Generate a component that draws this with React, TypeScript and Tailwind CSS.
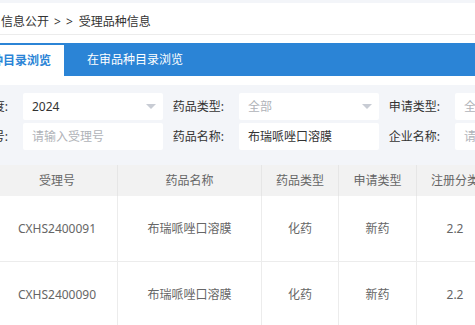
const font = { fontFamily: '"Noto Sans", "Noto Sans CJK SC", sans-serif' };

function Caret() {
  return (
    <span className="h-0 w-0 border-x-[5px] border-t-[5px] border-x-transparent border-t-[#c8ccd4]" />
  );
}

function Field({
  label,
  value,
  placeholder,
  select,
}: {
  label: string;
  value?: string;
  placeholder?: string;
  select?: boolean;
}) {
  return (
    <div className="flex shrink-0 items-center">
      <div className="w-[76px] shrink-0 pr-[15px] text-right text-[12px] leading-[27px] text-[#333]">
        {label}
      </div>
      <div className="flex h-[27px] w-[140px] shrink-0 items-center justify-between rounded-[2px] bg-white pl-[9px] pr-[7px] text-[12px]">
        <span className={value ? "text-[#333]" : "text-[#b0b3b8]"}>{value ?? placeholder}</span>
        {select && <Caret />}
      </div>
    </div>
  );
}

const cols = ["w-[121px]", "w-[144px]", "w-[77px]", "w-[78px]", "w-[77px]", "w-[80px]"];

const rows = [
  ["CXHS2400091", "布瑞哌唑口溶膜", "化药", "新药", "2.2", ""],
  ["CXHS2400090", "布瑞哌唑口溶膜", "化药", "新药", "2.2", ""],
];

export default function App() {
  return (
    <div className="h-[325px] w-[475px] overflow-hidden bg-[#f3f5f9]" style={font}>
      <div className="mt-[3px] bg-white">
        <div className="flex h-[32px] items-center border-b border-[#ececec] pl-[1px] pt-[6px] text-[12px] text-[#333]">
          <span>信息公开</span>
          <span className="ml-[5px]">&gt;</span>
          <span className="ml-[5px]">&gt;</span>
          <span className="ml-[6px]">受理品种信息</span>
        </div>
        <div className="h-[8px]" />
        <div className="flex h-[33px] bg-[#2b84d6]">
          <div className="ml-[-80px] mt-[2px] flex w-[144px] items-center justify-end bg-white pr-[13px] text-[12px] font-bold text-[#2b84d6]">
            受理品种目录浏览
          </div>
          <div className="flex items-center pl-[23px] pt-[1px] text-[12px] text-white">在审品种目录浏览</div>
        </div>
        <div className="h-[9px]" />
      </div>

      <div className="ml-[-53px] flex flex-col gap-[3px] pb-[15px] pt-[8px]">
        <div className="flex">
          <Field label="年度:" value="2024" select />
          <Field label="药品类型:" placeholder="全部" select />
          <Field label="申请类型:" placeholder="全部" select />
        </div>
        <div className="flex">
          <Field label="受理号:" placeholder="请输入受理号" />
          <Field label="药品名称:" value="布瑞哌唑口溶膜" />
          <Field label="企业名称:" placeholder="请输入企业名称" />
        </div>
      </div>

      <div className="ml-[-3px] bg-white text-[12px]">
        <div className="flex h-[31px] bg-[#f2f2f2] text-[#666]">
          {["受理号", "药品名称", "药品类型", "申请类型", "注册分类", "企业名称"].map((h, i) => (
            <div
              key={h}
              className={`${cols[i]} flex shrink-0 items-center justify-center whitespace-nowrap border-r border-[#e6e6e6]`}
            >
              {h}
            </div>
          ))}
        </div>
        {rows.map((r) => (
          <div key={r[0]} className="flex h-[66px] border-b border-[#ececec] text-[#666]">
            {r.map((c, i) => (
              <div
                key={i}
                className={`${cols[i]} flex shrink-0 items-center justify-center whitespace-nowrap border-r border-[#ececec]`}
              >
                {c}
              </div>
            ))}
          </div>
        ))}
      </div>
    </div>
  );
}
